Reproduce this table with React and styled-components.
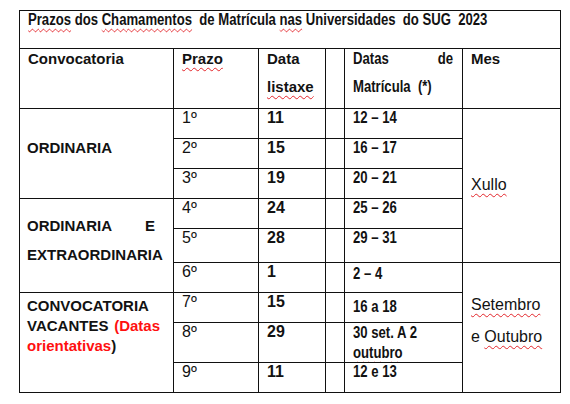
import React from "react";
import styled, { createGlobalStyle } from "styled-components";

const sans = `"Liberation Sans", Arial, sans-serif`;
const NARROW = 0.82;

const GlobalStyle = createGlobalStyle`
  html, body {
    margin: 0;
    padding: 0;
    background: #fff;
  }
  body {
    font-family: ${sans};
    color: #121212;
  }
`;

const Page = styled.div`
  padding: 10px 0 0 19px;
`;

const Table = styled.table`
  border-collapse: collapse;
  table-layout: fixed;
  width: 541px;
`;

const Row = styled.tr`
  height: ${(p) => p.$h}px;
`;

const BaseCell = styled.td`
  border: 1px solid #111;
  vertical-align: top;
  padding: 0 8px;
  font-size: 16px;
  line-height: 18px;
  overflow: hidden;
`;

// Arial Narrow is not installed: squeeze Liberation Sans Bold instead
const Narrow = styled.div`
  width: calc(100% / ${NARROW});
  transform: scaleX(${NARROW});
  transform-origin: left top;
  font-weight: 700;
  text-align: ${(p) => (p.$justify ? "justify" : "left")};
  white-space: ${(p) => (p.$pre ? "pre-wrap" : "normal")};
`;

const TitleCell = styled(BaseCell)``;

const HeadCell = styled(BaseCell)`
  font-size: ${(p) => (p.$narrow ? 16 : 15)}px;
  font-weight: 700;
  padding-right: ${(p) => p.$pr ?? 8}px;
`;

const HeadText = styled.div`
  line-height: 28px;
  margin-top: -4px;
`;

const GroupCell = styled(BaseCell)`
  font-size: 15px;
  font-weight: 700;
  padding: ${(p) => p.$pt}px ${(p) => p.$pr}px 0 7px;
  line-height: ${(p) => p.$lh}px;
  text-align: justify;
`;

const PrazoCell = styled(BaseCell)``;

const ListaxeCell = styled(BaseCell)`
  font-weight: 700;
`;

const SpacerCell = styled(BaseCell)`
  padding: 0;
`;

const DateCell = styled(BaseCell)`
  padding: ${(p) => p.$pt ?? 0}px 9px 0 8px;
  line-height: ${(p) => p.$lh ?? 18}px;
`;

const MonthCell = styled(BaseCell)`
  padding-top: ${(p) => p.$pt}px;
  line-height: ${(p) => p.$lh}px;
`;

const Spell = styled.span`
  text-decoration: underline wavy #e3262b;
  text-decoration-thickness: 1px;
  text-underline-offset: 3px;
`;

const Red = styled.span`
  color: #ff1010;
`;

const rows = [
  { prazo: "1º", listaxe: "11", date: "12 – 14" },
  { prazo: "2º", listaxe: "15", date: "16 – 17" },
  { prazo: "3º", listaxe: "19", date: "20 – 21" },
  { prazo: "4º", listaxe: "24", date: "25 – 26" },
  { prazo: "5º", listaxe: "28", date: "29 – 31", h: 34 },
  { prazo: "6º", listaxe: "1", date: "2 – 4", pt: 2 },
  { prazo: "7º", listaxe: "15", date: "16 a 18", pt: 5 },
  {
    prazo: "8º",
    listaxe: "29",
    date: (
      <>
        30 set. A 2 <Spell>outubro</Spell>
      </>
    ),
    h: 39,
    lh: 19.5,
  },
  { prazo: "9º", listaxe: "11", date: "12 e 13" },
];

const groups = {
  0: (
    <GroupCell rowSpan={3} $pt={30} $pr={13} $lh={18}>
      ORDINARIA
    </GroupCell>
  ),
  3: (
    <GroupCell rowSpan={3} $pt={12} $pr={18} $lh={29}>
      <span>ORDINARIA</span> <span>E</span> <span>EXTRAORDINARIA</span>
    </GroupCell>
  ),
  6: (
    <GroupCell rowSpan={3} $pt={3} $pr={13} $lh={20}>
      <span>CONVOCATORIA</span> <span>VACANTES</span> <Red>(Datas</Red>{" "}
      <Red>orientativas</Red>)
    </GroupCell>
  ),
};

const months = {
  0: (
    <MonthCell rowSpan={5} $pt={67} $lh={18}>
      <Spell>Xullo</Spell>
    </MonthCell>
  ),
  5: (
    <MonthCell rowSpan={4} $pt={26} $lh={31.5}>
      <Spell>Setembro</Spell> e <Spell>Outubro</Spell>
    </MonthCell>
  ),
};

export default function App() {
  return (
    <Page>
      <GlobalStyle />
      <Table>
        <colgroup>
          <col style={{ width: 154 }} />
          <col style={{ width: 85 }} />
          <col style={{ width: 67 }} />
          <col style={{ width: 19 }} />
          <col style={{ width: 118 }} />
          <col style={{ width: 98 }} />
        </colgroup>
        <tbody>
          <Row $h={38}>
            <TitleCell colSpan={6}>
              <Narrow $pre>
                <Spell>Prazos</Spell> dos <Spell>Chamamentos</Spell>{"  "}de Matrícula{" "}
                <Spell>nas</Spell> Universidades{"  "}do SUG{"  "}2023
              </Narrow>
            </TitleCell>
          </Row>
          <Row $h={60}>
            <HeadCell>
              <HeadText>Convocatoria</HeadText>
            </HeadCell>
            <HeadCell>
              <HeadText>
                <Spell>Prazo</Spell>
              </HeadText>
            </HeadCell>
            <HeadCell>
              <HeadText>
                Data <Spell>listaxe</Spell>
              </HeadText>
            </HeadCell>
            <SpacerCell />
            <HeadCell $narrow $pr={9}>
              <HeadText>
                <Narrow $justify $pre>
                  {"Datas de Matrícula  (*)"}
                </Narrow>
              </HeadText>
            </HeadCell>
            <HeadCell>
              <HeadText>Mes</HeadText>
            </HeadCell>
          </Row>
          {rows.map((r, i) => (
            <Row key={i} $h={r.h ?? 30}>
              {groups[i]}
              <PrazoCell>{r.prazo}</PrazoCell>
              <ListaxeCell>{r.listaxe}</ListaxeCell>
              <SpacerCell />
              <DateCell $pt={r.pt} $lh={r.lh}>
                <Narrow>{r.date}</Narrow>
              </DateCell>
              {months[i]}
            </Row>
          ))}
        </tbody>
      </Table>
    </Page>
  );
}
